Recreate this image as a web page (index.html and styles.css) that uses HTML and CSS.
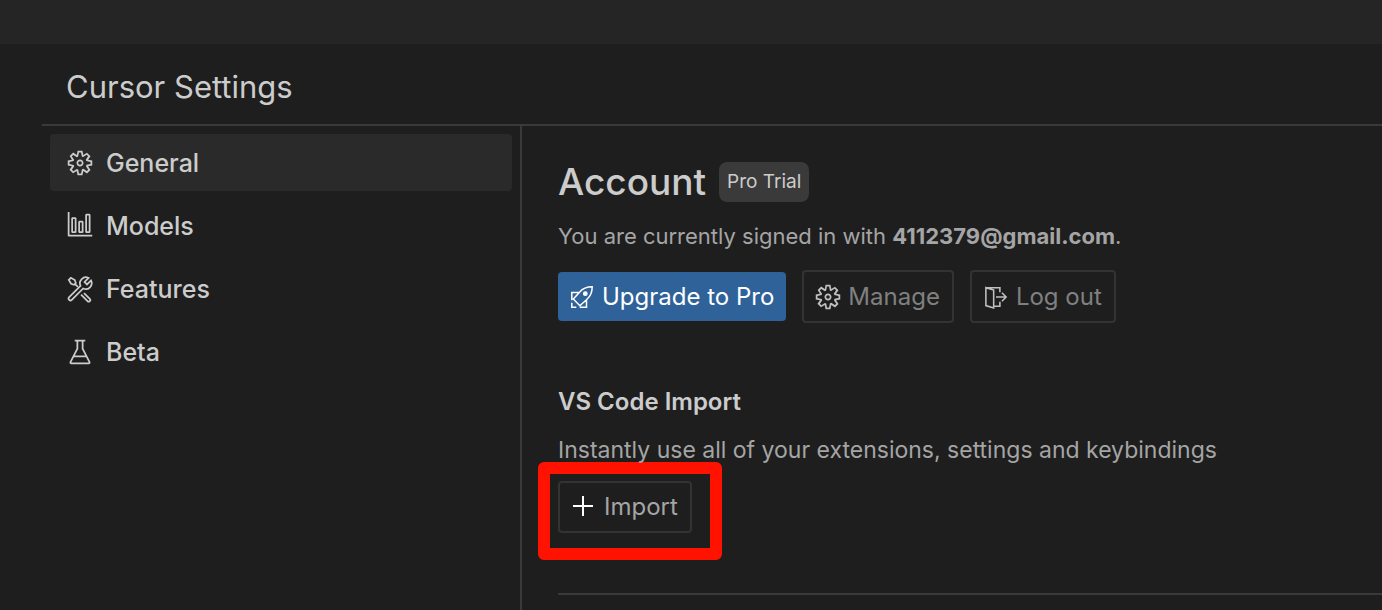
FILE: index.html
```html
<!DOCTYPE html>
<html lang="en">
<head>
<meta charset="utf-8">
<title>Cursor Settings</title>
<link rel="stylesheet" href="styles.css">
</head>
<body>
<svg class="defs" aria-hidden="true">
  <symbol id="gear" viewBox="0 0 16 16"><path d="M9.1 4.4L8.6 2H7.4l-.5 2.4-.7.3-2-1.3-.9.8 1.3 2-.2.7-2.4.5v1.2l2.4.5.3.8-1.3 2 .8.8 2-1.3.8.3.4 2.3h1.2l.5-2.4.8-.3 2 1.3.8-.8-1.3-2 .3-.8 2.3-.4V7.4l-2.4-.5-.3-.8 1.3-2-.8-.8-2 1.3-.7-.2zM9.4 1l.5 2.4L12 2.1l2 2-1.4 2.1 2.4.4v2.8l-2.4.5L14 12l-2 2-2.1-1.4-.5 2.4H6.6l-.5-2.4L4 13.9l-2-2 1.4-2.1L1 9.4V6.6l2.4-.5L2.1 4l2-2 2.1 1.4.4-2.4h2.8zm.6 7c0 1.1-.9 2-2 2s-2-.9-2-2 .9-2 2-2 2 .9 2 2zM8 9c.6 0 1-.4 1-1s-.4-1-1-1-1 .4-1 1 .4 1 1 1z"/></symbol>
</svg>
<div class="topbar"></div>
<div class="page">
  <header class="header"><h1 class="title">Cursor Settings</h1></header>
  <div class="body">
    <nav class="sidebar">
      <a class="item active" href="#general"><svg class="icon"><use href="#gear"/></svg>General</a>
      <a class="item" href="#models"><svg class="icon" viewBox="0 0 16 16"><path d="M1.5 14H15v-1H2V0H1v13.5l.5.5zM3 11.5v-8l.5-.5h2l.5.5v8l-.5.5h-2l-.5-.5zm2-.5V4H4v7h1zm6-9.5v10l.5.5h2l.5-.5v-10l-.5-.5h-2l-.5.5zm2 .5v9h-1V2h1zm-6 9.5v-6l.5-.5h2l.5.5v6l-.5.5h-2l-.5-.5zm2-.5V6H8v5h1z"/></svg>Models</a>
      <a class="item" href="#features"><svg class="icon line" viewBox="0 0 16 16"><path d="M12.9 1.700a3.400 3.400 0 0 0-4.600 4.500L1.800 12.700a1 1 0 0 0 1.500 1.500L9.800 7.700a3.400 3.400 0 0 0 4.500-4.600L12 5.400 10.600 4z"/><path d="M1.600 2.800 2.800 1.600 5 2.900l.6 1.700-1 1-1.700-.6zM5.300 5.300l1.500 1.500M10.300 10.300l3.300 3.300a.9.9 0 0 1-1.300 1.300L8.600 11.200"/></svg>Features</a>
      <a class="item" href="#beta"><svg class="icon" viewBox="0 0 16 16"><path d="M13.893 13.558L10 6.006v-4h1v-1H9.994V1l-.456.005H5V2h1v3.952l-3.894 7.609A1 1 0 0 0 3 15.006h10a1 1 0 0 0 .893-1.448zm-7-7.15L7 6.193V2.036l2-.024v4.237l.11.215 1.827 3.542H5.049l1.844-3.598zM3 14.017l1.54-3.011h6.916l1.547 3H3z"/></svg>Beta</a>
    </nav>
    <main class="content">
      <section class="account">
        <div class="heading"><h2 class="account-title">Account</h2><span class="badge">Pro Trial</span></div>
        <p class="text">You are currently signed in with <b>4112379@gmail.com</b>.</p>
        <div class="actions">
          <button class="btn primary"><svg class="icon small line" viewBox="0 0 16 16"><path d="M14.800 1.200c-3.500 0-6.300 1-8.300 3.500L2.200 9.400l4.400 4.400 4.700-4.300c2.500-2 3.500-4.800 3.500-8.300zM6.300 5H1.200v5.200M11 9.700v5.100H6.500M1.200 11.800v3h3"/><circle class="dot" cx="10.200" cy="5.800" r="1.100"/></svg>Upgrade to Pro</button>
          <button class="btn muted"><svg class="icon"><use href="#gear"/></svg>Manage</button>
          <button class="btn muted"><svg class="icon line" viewBox="-1 -1.500 18 18"><path d="M1.500 1.500h9v3M10.500 10.500v3H7M1.500 1.500v11.500l5 1.500V3zM8 7.500h6.500M11.800 4.800l2.700 2.700-2.700 2.700"/></svg>Log out</button>
        </div>
      </section>
      <section class="import">
        <h3 class="subtitle">VS Code Import</h3>
        <p class="text wide">Instantly use all of your extensions, settings and keybindings</p>
        <div class="target"><button class="btn short"><svg class="icon plus line" viewBox="0 0 28 28"><path d="M13 3v20M3 13h20"/></svg>Import</button></div>
      </section>
    </main>
  </div>
</div>
</body>
</html>
```
FILE: styles.css
```css
* { box-sizing: border-box; }
body {
  margin: 0;
  min-height: 100vh;
  display: flex;
  flex-direction: column;
  background: #1e1e1e;
  color: #cccccc;
  font: 24px/32px Inter, sans-serif;
}
h1, h2, h3, p { margin: 0; font-weight: 400; }
.defs { position: absolute; width: 0; height: 0; }
.topbar { height: 44px; background: #252526; }
.page { flex: 1; display: flex; flex-direction: column; padding-left: 42px; }
.header { padding: 23px 24px 17px; border-bottom: 2px solid #3a3a3a; }
.title { font-size: 31px; line-height: 40px; }
.body { flex: 1; display: flex; }
.sidebar {
  width: 480px;
  flex: none;
  padding: 8px;
  display: flex;
  flex-direction: column;
  gap: 6px;
  border-right: 2px solid #3a3a3a;
}
.item {
  display: flex;
  align-items: center;
  gap: 12px;
  height: 57px;
  padding: 0 16px;
  border-radius: 4px;
  color: #cccccc;
  font-size: 25px;
  font-weight: 450;
  text-decoration: none;
}
.active { background: #2a2a2a; }
.icon { width: 28px; height: 28px; flex: none; fill: currentColor; }
.line { fill: none; stroke: currentColor; stroke-width: 1; }
.dot { fill: currentColor; }
.small { width: 24px; height: 24px; }
.plus { stroke-width: 2; }
.content { flex: 1; min-width: 0; padding: 36px 0 0 36px; }
.heading { display: flex; align-items: center; gap: 13px; }
.account-title { font-size: 37px; line-height: 40px; font-weight: 450; }
.badge {
  padding: 4px 8px;
  border-radius: 8px;
  background: #3a3a3a;
  font-size: 19px;
}
.text { color: #a5a5a5; font-size: 22px; }
.account .text { margin-top: 18px; }
.actions { display: flex; align-items: center; gap: 16px; margin-top: 18px; }
.btn {
  display: flex;
  align-items: center;
  gap: 6px;
  height: 53px;
  padding: 0 12px 0 10px;
  border: 2px solid #333333;
  border-radius: 4px;
  background: transparent;
  color: #a5a5a5;
  font: inherit;
}
.primary { gap: 8px; height: 49px; padding: 0 12px; border: 0; background: #2e6299; color: #ffffff; }
.short { height: 52px; }
.muted { color: #808080; }
.muted .icon { color: #c0c0c0; }
.plus { color: #ffffff; }
.import { margin-top: 63px; padding-bottom: 33px; border-bottom: 2px solid #3a3a3a; }
.subtitle { font-size: 24px; font-weight: 600; }
.import .text { margin-top: 16px; }
.wide { font-size: 23px; }
.target {
  width: max-content;
  margin: -4px 0 0 -20px;
  padding: 7px 18px 15px 8px;
  border: 12px solid #ff1200;
  border-radius: 6px;
}
```
